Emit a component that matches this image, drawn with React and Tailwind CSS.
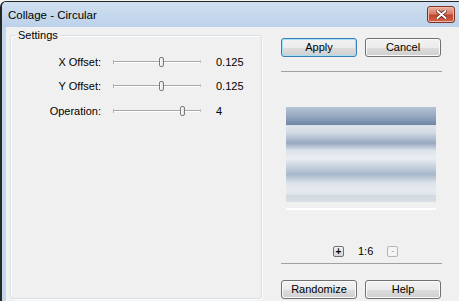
import React from "react";

function Btn({ children, def, className = "" }) {
  return (
    <div
      className={`h-[19px] w-[76px] flex items-center justify-center rounded-[3px] border text-[11px] bg-[linear-gradient(#f2f2f2_0%,#ebebeb_50%,#dddddd_51%,#cfcfcf_100%)] ${
        def
          ? "border-[#3c7fb1] shadow-[inset_0_0_0_1px_#a5def7]"
          : "border-[#707070] shadow-[inset_0_0_0_1px_#fbfbfb]"
      } ${className}`}
    >
      {children}
    </div>
  );
}

function Slider({ left }) {
  return (
    <div className="relative w-[88px] h-[10px] flex items-center">
      <div className="w-full h-[2px] border-t border-[#a8a8a8] border-b border-b-white" />
      <div className="absolute left-0 top-[3px] w-px h-[4px] bg-[#b4b4b4]" />
      <div className="absolute right-0 top-[3px] w-px h-[3px] bg-[#c4c4c4]" />
      <div
        className="absolute top-0 w-[5px] h-[10px] rounded-[2px] border border-[#7a7a7a] bg-[linear-gradient(90deg,#ffffff,#e2e2e2)]"
        style={{ left }}
      />
    </div>
  );
}

function Row({ label, value, thumb, className = "" }) {
  return (
    <div className={`h-[24px] flex items-center ${className}`}>
      <div className="w-[90px] text-right">{label}</div>
      <div className="ml-[12px]">
        <Slider left={thumb} />
      </div>
      <div className="ml-[15px]">{value}</div>
    </div>
  );
}

export default function App() {
  return (
    <div className="w-[459px] h-[301px] overflow-hidden bg-[#f4f4f4] pt-px text-[11px] text-black font-['Liberation_Sans',Arial,sans-serif]">
      <div className="h-[300px] flex flex-col border-l-2 border-t border-[#262626] rounded-tl-[6px] bg-[#c4d6ea] overflow-hidden">
        {/* title bar */}
        <div className="h-[25px] shrink-0 flex items-center justify-between pl-[6px] pr-[4px] bg-[linear-gradient(#d0dff0,#bcd1e9)]">
          <span className="pt-[2px] text-[11.5px]">Collage - Circular</span>
          <div className="w-[28px] h-[17px] flex items-center justify-center rounded-[3px] border border-[#7d3328] bg-[linear-gradient(#ecb0a3_0%,#d97a66_45%,#c2442c_55%,#d2654a_100%)] shadow-[inset_0_0_0_1px_#f0b8aa]">
            <svg width="11" height="9" viewBox="0 0 11 9">
              <path d="M1.5 1 L9.5 8 M9.5 1 L1.5 8" stroke="#5a1e14" strokeWidth="3.6" strokeLinecap="round" />
              <path d="M1.5 1 L9.5 8 M9.5 1 L1.5 8" stroke="#ffffff" strokeWidth="2" strokeLinecap="round" />
            </svg>
          </div>
        </div>
        {/* body */}
        <div className="flex-1 flex ml-[4px] pl-[4px] bg-[#f0f0f0]">
          {/* settings group */}
          <div className="relative mt-[8px] w-[252px] h-[264px] border border-[#d5dfe5] rounded-[3px] shadow-[inset_1px_1px_0_#ffffff,1px_1px_0_#ffffff]">
            <div className="absolute left-[5px] -top-[8px] px-[2px] bg-[#f0f0f0] leading-[14px]">Settings</div>
            <div className="pt-[14px] flex flex-col">
              <Row label="X Offset:" value="0.125" thumb="46px" />
              <Row label="Y Offset:" value="0.125" thumb="46px" />
              <Row label="Operation:" value="4" thumb="67px" className="mt-px" />
            </div>
          </div>
          {/* right panel */}
          <div className="pl-[19px] pt-[11px] w-[180px] flex flex-col">
            <div className="flex justify-between w-[160px]">
              <Btn def>Apply</Btn>
              <Btn>Cancel</Btn>
            </div>
            <div className="mt-[14px] w-[161px] h-px bg-[#a0a0a0]" />
            <div className="mt-[35px] ml-[5px] w-[150px] h-[95px] bg-[linear-gradient(#b6c4d5_0%,#94a7bf_10%,#6d85a4_19%,#dfe5ec_19.5%,#d2dae4_27%,#97a9c0_38%,#dde3ea_46%,#eaeef3_54%,#a7b7ca_71%,#dde3ea_80%,#e6eaef_87%,#e0e5ea_92.5%,#d3d9e0_93%,#d9dee4_100%)]" />
            <div className="mt-[6px] ml-[5px] w-[150px] h-[2px] bg-white" />
            <div className="mt-[36px] h-[11px] flex items-center">
              <div className="ml-[52px] w-[11px] h-[11px] rounded-[2px] border border-[#707070] bg-[linear-gradient(#f4f4f4,#d4d4d4)] flex items-center justify-center text-[10px] leading-none font-bold">
                +
              </div>
              <div className="ml-[14px]">1:6</div>
              <div className="ml-[14px] w-[11px] h-[11px] rounded-[2px] border border-[#b5b5b5] bg-[#f4f4f4] flex items-center justify-center text-[9px] leading-none text-[#a0a0a0]">
                -
              </div>
            </div>
            <div className="mt-[6px] w-[161px] h-px bg-[#a0a0a0]" />
            <div className="mt-[16px] flex justify-between w-[160px]">
              <Btn>Randomize</Btn>
              <Btn>Help</Btn>
            </div>
          </div>
        </div>
      </div>
    </div>
  );
}
